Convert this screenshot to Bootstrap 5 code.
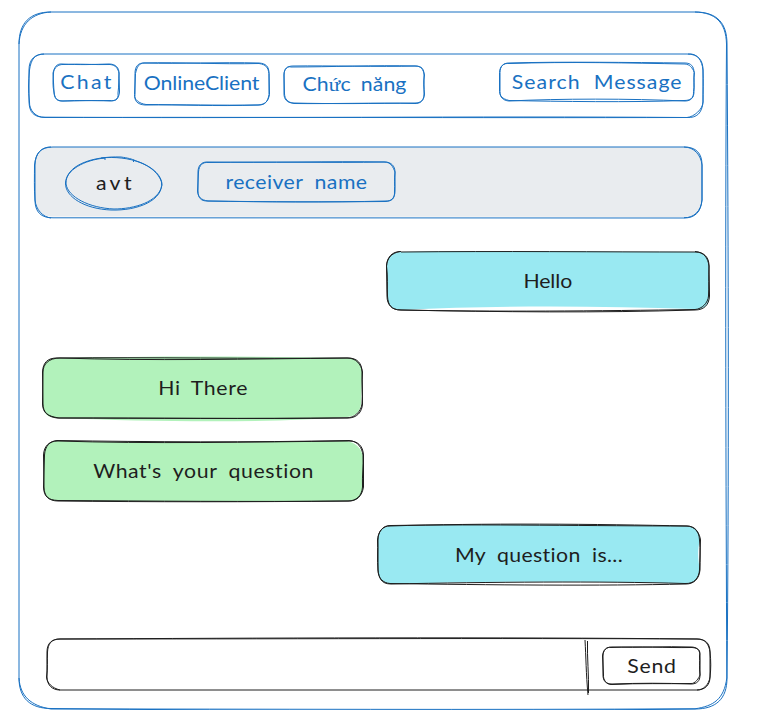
<!DOCTYPE html>
<html lang="vi">
<head>
<meta charset="utf-8">
<meta name="viewport" content="width=device-width, initial-scale=1">
<title>Chat</title>
<link href="https://cdn.jsdelivr.net/npm/bootstrap@5.3.0/dist/css/bootstrap.min.css" rel="stylesheet">
<style>
  body { font-family: Lato, "Open Sans", sans-serif; font-size: 19px; line-height: 24px; color: #1e1e1e; background: #fff; }
  .chat-frame { width: 708px; height: 698px; margin: 12px 0 0 19px; padding: 42px 17px 20px 10px; }
  .sketch { position: relative; flex: none; }
  /* hand-drawn outline lying under the box content */
  .outline { position: absolute; inset: 0; width: 100%; height: 100%; overflow: visible; fill: none; stroke: currentColor; stroke-width: 1; pointer-events: none; }
  .outline .fill { stroke: none; }
  /* wide, loosely spaced lettering */
  .lettering { --ls: 0px; position: relative; display: inline-block; white-space: pre; transform: scaleX(1.12); letter-spacing: var(--ls); margin-right: calc(var(--ls) * -1); font-variant-ligatures: none; }
  .blue { color: #1971c2; }
  .ink { color: #1e1e1e; }
  .gray-fill { fill: #e9ecef; } .cyan-fill { fill: #99e9f2; } .green-fill { fill: #b2f2bb; }
  .top-bar { width: 674px; height: 64px; padding: 9px 9px 0 24px; }
  .tab-chat { width: 66px; height: 37px; margin-top: 1px; padding-bottom: 2px; }
  .tab-chat .lettering { --ls: 2.1px; }
  .tab-online { width: 134px; height: 42px; margin-left: 16px; padding-bottom: 3px; }
  .tab-online .lettering { --ls: -.1px; }
  .tab-func { width: 140px; height: 37px; margin: 3px 0 0 15px; }
  .tab-func .lettering { --ls: .1px; word-spacing: 4px; }
  .search-box { width: 194px; height: 38px; padding-bottom: 1px; }
  .search-box .lettering { --ls: .9px; word-spacing: 6px; }
  .receiver-bar { width: 667px; height: 71px; margin: 29px 0 0 6px; padding: 10px 0 0 30px; }
  .avatar { width: 97px; height: 53px; padding-bottom: 1px; }
  .avatar .lettering { --ls: 3px; }
  .receiver { width: 197px; height: 39px; margin: 5px 0 0 36px; }
  .receiver .lettering { --ls: .4px; word-spacing: 5px; }
  .out-msg { width: 322px; height: 58px; }
  .in-msg { width: 319px; height: 60px; }
  .msg-1 { margin: 34px 0 0 358px; }
  .msg-1 .lettering { --ls: -.1px; }
  .msg-2 { margin: 48px 0 0 14px; }
  .msg-2 .lettering { --ls: .6px; word-spacing: 4px; }
  .msg-3 { margin: 23px 0 0 15px; }
  .msg-3 .lettering { --ls: .5px; word-spacing: 5px; }
  .msg-4 { margin: 25px 0 0 349px; }
  .msg-4 .lettering { --ls: .3px; word-spacing: 5px; }
  .composer { width: 663px; height: 51px; margin: 55px 0 0 18px; padding: 8px 10px 0 0; }
  .send { width: 97px; height: 37px; font-size: 19px; line-height: 24px; }
  .send .lettering { --ls: .6px; }
  .serif { font-family: "Liberation Serif", serif; }
</style>
<script src="https://cdn.jsdelivr.net/npm/bootstrap@5.3.0/dist/js/bootstrap.bundle.min.js"></script>
</head>
<body>
<main class="chat-frame sketch d-flex flex-column align-items-start">
  <svg class="outline blue" viewBox="19 12 708 698"><path d="M51 12H695C717 12 727 23 727 44C728.500 260 729 480 727 678C727 699 716 709 695 709C480 711.500 260 711 51 708.500C30 708.500 19 698 19 678V44C19 23 30 12 51 12M695 12C715 12.500 726 22 726.500 44C725 260 726 480 726.800 678C724 699 714 706 695 708.800C480 710 260 709 51 709C31 706 20 696 19 678M19 44C20 24 32 13 51 12"/></svg>

  <nav class="top-bar sketch blue d-flex align-items-start">
    <svg class="outline" viewBox="29 54 674 64"><path d="M45 54H687C698 54 703 60 703 70C703.500 82 703 92 703 102C702 113 697 118 687 117.500C470 118 250 117 45 117.500C34 117 29.500 113 29 102V70C29 59 35 54 45 54M688 54C698 53 702 61 703 70V102C703 109 694 117 687 117.500C470 116 250 118.500 45 117.200C36 118 29 110 29.500 102C28 90 28.500 82 29.500 70C31 59 35 54 44 54"/></svg>
    <div class="tab-chat sketch d-flex align-items-center justify-content-center">
      <svg class="outline" viewBox="53 64 66 37"><path d="M62 64C80 65 92 64.500 109 64C116 64 119 68 119 73L119.500 92C119 98 116 101 110 101C92 100 78 101 62 101C56 101 55 98 54 92C52.500 86 53 80 53.500 73C54 67 57 63.500 62 64M64 64.500C80 63.500 94 65 110 64.500C116 65 118 69 119 73C118.500 80 119 86 118 93C119 101 114 101 110 100.500C94 101 78 100 63 101C57 101 54 98 54 92L53 73C54 68 58 64 64 64.500"/></svg>
      <span class="lettering">Chat</span>
    </div>
    <div class="tab-online sketch d-flex align-items-center justify-content-center">
      <svg class="outline" viewBox="135 62.500 134 42"><path d="M145 62.500C180 63.500 220 61.500 259 62.500C266 63 269 66 269 73V94C268 101 265 104.500 259 104.500C220 105 180 104 145 104.500C137 104 134 100 135 94V73C135 66 138 62 145 62.500M144 62.500C180 61.500 220 64 259 63C266 64 268 67 269 73L269.500 94C268 102 264 104 258 104.500C215 106 180 104 146 104C139 103 134 99 134.500 94L135.500 73C137 66 139 63 144 62.500"/></svg>
      <span class="lettering">OnlineClient</span>
    </div>
    <div class="tab-func sketch d-flex align-items-center justify-content-center">
      <svg class="outline" viewBox="284 66 140 37"><path d="M293 66C330 65.500 380 67 415 66C422 66 424 69 424 75V94C424 100 421 103 415 103C375 103.500 330 104 293 103C287 103 284 99 284 94V75C284 69 287 66 293 66M291 67C330 67 375 65 415 66C421 66 423 69 424.500 75C423 82 424 88 424.500 94C424 101 420 104 414 103.500C380 102.500 330 104 294 103.500C287 102 285 99 284.500 94L284 75C284 68 288 66 291 67"/></svg>
      <span class="lettering">Ch<i class="serif fst-normal">ứ</i>c năng</span>
    </div>
    <div class="search-box sketch d-flex align-items-center justify-content-center ms-auto">
      <svg class="outline" viewBox="500 63.500 194 38"><path d="M509 63.500C560 62 630 63 685 63.500C691 63.500 694 67 694 73V92C694 98 691 101.500 685 101.500C630 99 560 99 509 101.500C503 101 500 98 500 92V73C500 67 503 63.500 509 63.500M509 64C570 62 630 63.500 685 64.500C690 65 692 68 694.500 73C693 80 695 87 693.500 92C694 99 690 101 684 101C630 103 560 102 509 101C502 99 500 97 499.500 92V73C500 66 504 63.500 509 64"/></svg>
      <span class="lettering">Search Message</span>
    </div>
  </nav>

  <header class="receiver-bar sketch blue d-flex align-items-start">
    <svg class="outline" viewBox="35 147 667 71"><path class="fill gray-fill" d="M53 147H684C696 147 702 153 702 165V200C702 212 696 217 684 217L53 216.500C41 216 35 212 35 200V165C35 153 41 147 53 147"/><path d="M53 147H684C696 147 702 153 702 165V200C701 212 695 218 684 218L53 217.800C41 218 35 212 35 200V165C35 153 41 147 53 147M684 147C694 147 701 155 702 165V200C701 211 694 218 684 217.700M51 218C43 217 36 210 35 200C34 188 34.500 177 34.500 165C36 153 41 147 51 147"/></svg>
    <div class="avatar sketch d-flex align-items-center justify-content-center">
      <svg class="outline" viewBox="65 157 97 53"><path d="M101 158C130 155 156 165 161.500 182C164 200 138 211 111 210C85 209 65 197 65.500 183C66 170 84 160 105 158M133 160C151 165 162 175 162 185C159 202 134 209 114 209C89 208 68 197 66 184C65 166 91 156 121 157C128 158 132 159 135 160.500M105 157V160M133.500 160V162"/></svg>
      <span class="lettering ink">avt</span>
    </div>
    <div class="receiver sketch d-flex align-items-center justify-content-center">
      <svg class="outline" viewBox="198 162 197 39"><path d="M207 162C270 163 330 161 385 162C391 162 395 166 395 172V191C395 198 391 201.500 385 201.500C330 202 270 202 207 201C201 201 198 198 198 191V172C198 166 201 162 207 162M208 162.500C270 161.500 330 163 384 162C391 162 393 167 395 172C394 179 395 185 394.500 191C395 200 391 201 386 201C330 202.500 260 202 208 201C201 200 198 197 197.500 191L198.500 172C199 165 203 162 208 162.500"/></svg>
      <span class="lettering">receiver name</span>
    </div>
  </header>

  <div class="out-msg msg-1 sketch d-flex align-items-center justify-content-center">
    <svg class="outline" viewBox="387 252 322 58"><path class="fill cyan-fill" d="M401 252C490 250 600 252 695 252C704 252 709 257 709 266V296C709 305 704 310 695 309C600 306 500 305 401 310C392 310 387 305 387 296V266C387 257 392 252 401 252"/><path d="M401 252C500 251 600 252 695 252C704 252 709 257 709 266L709.500 296C709 305 704 310 695 310C600 313 500 312 401 310C392 310 387 305 387 296L386.500 266C387 257 392 251.500 401 251.500M695 251.500C704 252 708 258 709 266C708.500 277 709 287 708.500 296C708 303 702 309 695 309.500C600 311 490 312 401 310C391 310 388 305 387.500 296C387 287 388 277 386.500 266C387 259 391 253 400 251.500"/></svg>
    <span class="lettering">Hello</span>
  </div>

  <div class="in-msg msg-2 sketch d-flex align-items-center justify-content-center">
    <svg class="outline" viewBox="43 358 319 60"><path class="fill green-fill" d="M57 358C150 356 250 356 350 358C358 359 361 364 362 373L361 404C360 413 355 416 347 417C270 423 160 422 57 418C47 418 43 413 43 404V372C43 363 48 358 57 358"/><path d="M57 358C150 357 250 359 348 358C357 358 362 363 362 372L362.500 404C362 412 357 418 348 418C250 419 150 418 57 418C48 417 43 412 43 404L42.500 372C43 362 48 358 57 358M60 358C150 361 250 359 347 358C356 358 361 364 362.500 372C361.500 382 363 394 362 404C361 412 354 418 347 417.800C250 419 150 418 59 418C47 416 43 413 42.500 404L43 372C43 364 49 358 60 358"/></svg>
    <span class="lettering">Hi There</span>
  </div>

  <div class="in-msg msg-3 sketch d-flex align-items-center justify-content-center">
    <svg class="outline" viewBox="44 441 319 60"><path class="fill green-fill" d="M58 441C150 443 250 443 347 441C356 443 361 448 363 456V488C362 497 357 501 350 501H58C48 501 44 496 44 487V455C44 446 49 441 58 441"/><path d="M58 441C150 444 250 442 349 441C358 441 363 446 363.500 455V487C362 496 357 501 349 501C250 502 150 502 58 501C49 501 44 496 44 487L43.500 455C44 446 49 441 58 441M57 440.500C150 442 250 442.500 349 440.500C358 441 362 448 363 455C363.500 466 362 476 362.500 487C362 496 356 501 348 501C250 502 150 501 58 500.500C48 500 44 497 43.500 487L44.500 455C45 446 50 441 57 440.500"/></svg>
    <span class="lettering">What's your question</span>
  </div>

  <div class="out-msg msg-4 sketch d-flex align-items-center justify-content-center">
    <svg class="outline" viewBox="378 526 322 58"><path class="fill cyan-fill" d="M392 526C480 523 600 525 686 526C695 526 700 531 700 540C697 551 698 560 700 570C699 579 695 583 686 583.500C600 581 490 581 392 584C383 584 378 579 378 570V540C378 531 383 526 392 526"/><path d="M390 526C480 523 600 524 686 526C695 526 699 531 699.500 540C700.500 550 700 560 700 570C699 579 694 584 686 584C600 586 490 585 390 583.500C383 583 378 578 378 570V540C378 531 383 526 390 526M391 525.500C480 524 600 526 687 526C695 526 700 534 700.500 540L699.500 570C699 578 694 584 685 583.500C600 581 490 582 391 584C381 584 379 578 378 570C377 560 378 550 377.500 540C378 533 382 525 391 525.500"/></svg>
    <span class="lettering">My question is...</span>
  </div>

  <div class="composer sketch d-flex align-items-start justify-content-end">
    <svg class="outline" viewBox="47 639 663 51"><path d="M60 639C250 638 500 637 697 639C705 639 710 643 710 652V677C710 685 705 690 697 690H60C52 690 47 685 47 677V652C47 643 52 639 60 639M60 639C260 639 500 638 697 639C706 639 709 645 710 652C711 661 711 669 710 677C709 685 703 690 697 690M60 690C52 688 47 683 46.500 677C48 669 47 660 47.500 652C48 644 51 639 60 639M585 640C586 657 586 673 588 695M587.500 641C587 658 589 675 588.500 693"/></svg>
    <button type="button" class="send sketch btn p-0 border-0 ink d-flex align-items-center justify-content-center">
      <svg class="outline" viewBox="603 647 97 37"><path d="M612 647C640 648 665 646 691 647C697 647 700 650 700 656V675C700 681 697 684 691 684C665 683 640 683 612 684C606 684 603 681 603 675V656C603 650 606 647 612 647M611 647.500C640 646 665 648 692 647.500C698 648 701 650 699.500 656C700 662 699 668 700 675C699 678 695 684 691 683.500C665 684 640 683 612 684.500C606 685 603 679 603.500 675L602.500 656C603 650 607 646.500 611 647.500"/></svg>
      <span class="lettering">Send</span>
    </button>
  </div>
</main>
</body>
</html>
